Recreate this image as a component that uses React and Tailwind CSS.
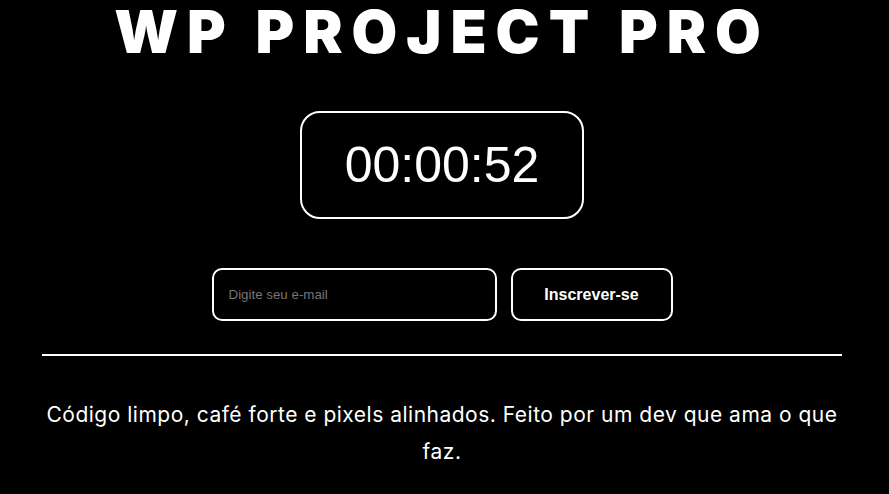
export default function App() {
  return (
    <div className="min-h-[494px] w-full bg-black text-white">
      <div className="w-[884px] flex flex-col items-center">
        <h1
          className="text-[59px] leading-[63px] font-black tracking-[9px] whitespace-nowrap"
          style={{ fontFamily: "Inter, sans-serif" }}
        >
          WP PROJECT PRO
        </h1>
        <div className="mt-[48px] w-[284px] h-[108px] border-2 border-white rounded-[20px] flex items-center justify-center">
          <span
            className="text-[50px] leading-[50px]"
            style={{ fontFamily: "'Liberation Sans', Arial, sans-serif" }}
          >
            00:00:52
          </span>
        </div>
        <div className="mt-[49px] flex gap-[14px]" style={{ fontFamily: "'Liberation Sans', Arial, sans-serif" }}>
          <input
            type="email"
            placeholder="Digite seu e-mail"
            className="w-[285px] h-[53px] bg-black border-2 border-white rounded-[10px] px-[15px] text-[13.333px] text-white placeholder:text-[#757575] outline-none"
          />
          <button className="w-[162px] h-[53px] bg-black border-2 border-white rounded-[10px] text-[16px] font-bold text-white">
            Inscrever-se
          </button>
        </div>
        <div className="mt-[33px] w-[800px] h-[2px] bg-white"></div>
        <p
          className="mt-[40px] w-[800px] text-center text-[21px] leading-[37px] tracking-[0.5px]"
          style={{ fontFamily: "Inter, sans-serif" }}
        >
          Código limpo, café forte e pixels alinhados. Feito por um dev que ama o que faz.
        </p>
      </div>
    </div>
  );
}
